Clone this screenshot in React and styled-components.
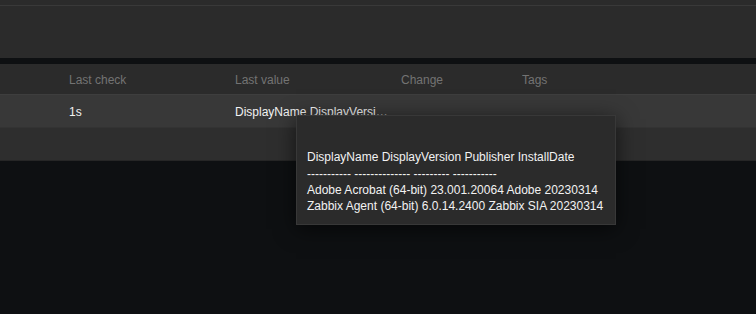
import React from 'react'
import styled, { createGlobalStyle } from 'styled-components';

const GlobalStyle = createGlobalStyle`
    html, body {
        margin: 0;
        padding: 0;
        background: #0e1012;
        font-family: "Liberation Sans", Arial, sans-serif;
        font-size: 12px;
    }
`;

const columns = ['', 'Last check', 'Last value', 'Change', 'Tags'];

function App() {
    return (
        <Page>
            <GlobalStyle />
            <TopStrip />
            <FilterPanel />
            <Table>
                <HeaderRow>
                    {columns.map((c, i) => (
                        <Cell key={i}>{c}</Cell>
                    ))}
                </HeaderRow>
                <DataRow>
                    <Cell />
                    <Cell>1s</Cell>
                    <Cell>
                        <Truncated>DisplayName DisplayVersion Publisher InstallDate</Truncated>
                    </Cell>
                    <Cell />
                    <Cell />
                </DataRow>
                <FooterRow />
            </Table>
            <Hintbox>
                {'\nDisplayName DisplayVersion Publisher InstallDate\n----------- -------------- --------- -----------\nAdobe Acrobat (64-bit) 23.001.20064 Adobe 20230314\nZabbix Agent (64-bit) 6.0.14.2400 Zabbix SIA 20230314'}
            </Hintbox>
        </Page>
    )
}

const Page = styled.div`
    position: relative;
    width: 756px;
    height: 314px;
    overflow: hidden;
    background: #0e1012;
`;

const TopStrip = styled.div`
    height: 5px;
    background: #2b2b2b;
    border-bottom: 1px solid #393939;
`;

const FilterPanel = styled.div`
    height: 52px;
    background: #2b2b2b;
    margin-bottom: 6px;
`;

const Table = styled.div`
    display: flex;
    flex-direction: column;
`;

const Row = styled.div`
    display: grid;
    grid-template-columns: 69px 166px 166px 121px 1fr;
    align-items: center;
`;

const HeaderRow = styled(Row)`
    height: 30px;
    background: #2b2b2b;
    color: #737373;
`;

const DataRow = styled(Row)`
    height: 32px;
    background: #383838;
    border-top: 1px solid #3e3e3e;
    border-bottom: 1px solid #333333;
    color: #f2f2f2;
`;

const FooterRow = styled.div`
    height: 32px;
    background: #2e2e2e;
    border-bottom: 1px solid #262626;
`;

const Cell = styled.div`
    white-space: nowrap;
    overflow: hidden;
    padding-top: 1px;
`;

const Truncated = styled.span`
    display: block;
    width: 154px;
    overflow: hidden;
    text-overflow: ellipsis;
    white-space: nowrap;
`;

const Hintbox = styled.div`
    position: absolute;
    left: 296px;
    top: 115px;
    width: 297px;
    padding: 17px 11px 10px 10px;
    background: #2b2b2b;
    border: 1px solid #383838;
    box-shadow: 0 4px 20px rgba(0, 0, 0, 0.6);
    color: #f2f2f2;
    line-height: 16.3px;
    white-space: pre;
`;

export default App;
